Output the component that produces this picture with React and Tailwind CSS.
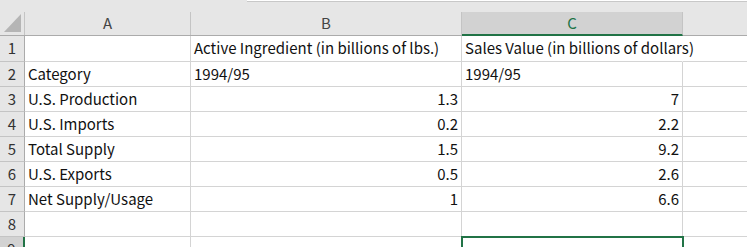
import React from 'react';

const columns = [
  { key: 'A', width: 'w-[166px]' },
  { key: 'B', width: 'w-[271px]' },
  { key: 'C', width: 'w-[221px]' },
];

const rows = [
  ['', 'Active Ingredient (in billions of lbs.)', 'Sales Value (in billions of dollars)'],
  ['Category', '1994/95', '1994/95'],
  ['U.S. Production', 1.3, 7],
  ['U.S. Imports', 0.2, 2.2],
  ['Total Supply', 1.5, 9.2],
  ['U.S. Exports', 0.5, 2.6],
  ['Net Supply/Usage', 1, 6.6],
  ['', '', ''],
  ['', '', ''],
];

const font = { fontFamily: '"Noto Sans CJK JP", "Noto Sans", sans-serif' };

const Cell = ({ value, width, selected, overflow }) => {
  const isNum = typeof value === 'number';
  return (
    <div
      className={`relative ${width} shrink-0 h-full border-r border-b border-[#d4d4d4] flex items-center px-[3px] whitespace-nowrap ${isNum ? 'justify-end' : 'justify-start'} ${overflow ? 'border-r-transparent' : ''}`}
    >
      <span className="relative z-10 bg-white">{value}</span>
      {selected && (
        <div className="absolute -left-[1px] -top-[1px] w-[223px] h-[14px] border-2 border-[#217346] z-20" />
      )}
    </div>
  );
};

export default function App() {
  return (
    <div className="w-[747px] h-[247px] overflow-hidden bg-white text-[15px] text-[#111]" style={font}>
      {/* top strip */}
      <div className="h-[12px] bg-[#e6e6e6]">
        <div className="ml-[247px] h-[2px] bg-white border-b border-[#c8c8c8]" />
      </div>

      {/* column headers */}
      <div className="flex h-[24px] bg-[#e6e6e6] border-b border-[#ababab] text-[#444]">
        <div className="w-[25px] shrink-0 border-r border-[#c4c4c4] flex items-end justify-end pr-[3px] pb-[3px]">
          <div className="w-0 h-0 border-l-[17px] border-l-transparent border-b-[18px] border-b-[#b5b5b5]" />
        </div>
        {columns.map((c) => (
          <div
            key={c.key}
            className={`${c.width} shrink-0 border-r border-[#c4c4c4] flex items-center justify-center ${c.key === 'C' ? 'bg-[#d2d2d2] text-[#217346] border-b-2 border-b-[#217346] -mb-[1px]' : ''}`}
          >
            {c.key}
          </div>
        ))}
        <div className="flex-1" />
      </div>

      {/* rows */}
      {rows.map((r, i) => (
        <div key={i} className={`flex ${i === 0 ? 'h-[26px]' : 'h-[25px]'}`}>
          <div
            className={`w-[25px] shrink-0 h-full border-r border-b flex items-center justify-center text-[#333] ${i === 8 ? 'bg-[#d2d2d2] border-r-2 border-r-[#217346] border-b-[#c4c4c4]' : 'bg-[#e6e6e6] border-r-[#ababab] border-b-[#c4c4c4]'}`}
          >
            {i + 1}
          </div>
          {r.map((v, j) => (
            <Cell
              key={j}
              value={v}
              width={columns[j].width}
              selected={i === 8 && j === 2}
              overflow={i === 0 && j === 2}
            />
          ))}
          <div className="flex-1 h-full border-b border-[#d4d4d4]" />
        </div>
      ))}
    </div>
  );
}
